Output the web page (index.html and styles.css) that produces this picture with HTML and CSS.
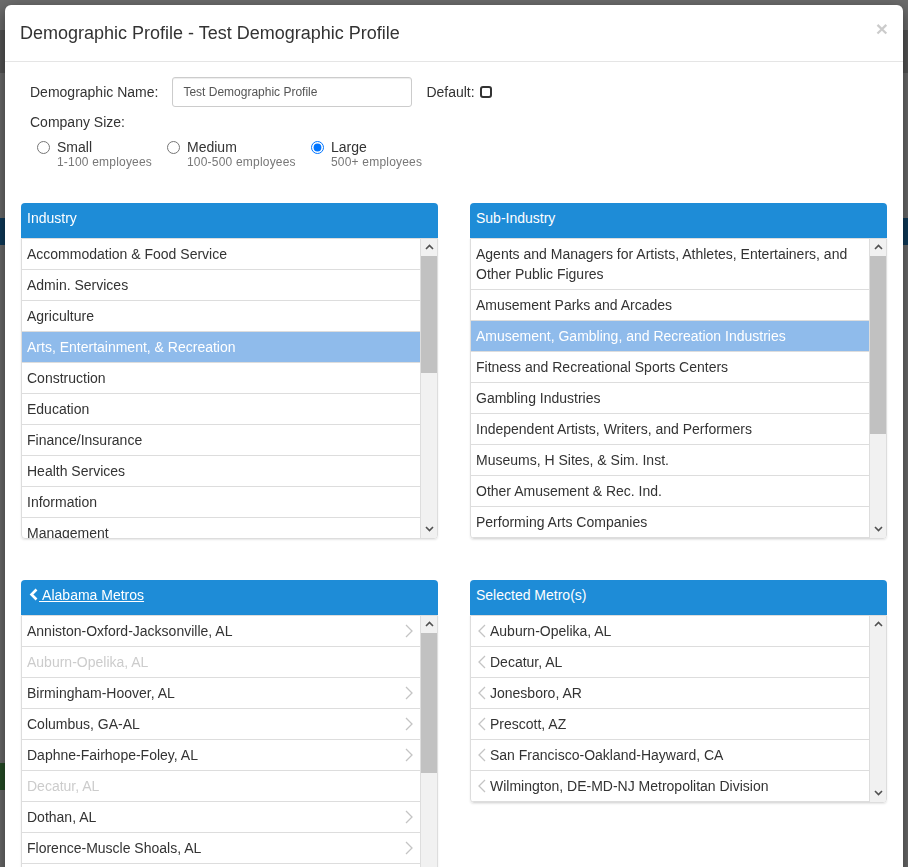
FILE: index.html
```html
<!DOCTYPE html>
<html lang="en">

<head>
  <meta charset="UTF-8">
  <title>Demographic Profile</title>
  <link rel="stylesheet" href="styles.css">
</head>

<body>
  <!-- page behind the modal -->
  <div class="page">
    <div class="page-top"></div>
    <div class="page-nav"></div>
    <div class="page-btn"></div>
  </div>
  <div class="backdrop"></div>

  <div class="modal">
    <div class="modal-header">
      <h4 class="modal-title">Demographic Profile - Test Demographic Profile</h4>
      <button class="close">&times;</button>
    </div>

    <div class="modal-body">
      <div class="fields">
        <div class="field-row">
          <label class="lbl">Demographic Name:</label>
          <input type="text" class="name-input" value="Test Demographic Profile">
          <label class="lbl default-lbl">Default:</label>
          <input type="checkbox" class="chk">
        </div>
        <div class="size-lbl">Company Size:</div>
        <div class="sizes">
          <label class="size size-small">
            <input type="radio" name="size">
            <span class="size-text"><span class="size-name">Small</span><span class="size-sub">1-100 employees</span></span>
          </label>
          <label class="size size-medium">
            <input type="radio" name="size">
            <span class="size-text"><span class="size-name">Medium</span><span class="size-sub">100-500 employees</span></span>
          </label>
          <label class="size">
            <input type="radio" name="size" checked>
            <span class="size-text"><span class="size-name">Large</span><span class="size-sub">500+ employees</span></span>
          </label>
        </div>
      </div>

      <div class="panels">
        <!-- Industry -->
        <div class="panel">
          <div class="panel-heading">Industry</div>
          <div class="panel-box">
            <div class="list">
              <div class="item">Accommodation &amp; Food Service</div>
              <div class="item">Admin. Services</div>
              <div class="item">Agriculture</div>
              <div class="item active">Arts, Entertainment, &amp; Recreation</div>
              <div class="item">Construction</div>
              <div class="item">Education</div>
              <div class="item">Finance/Insurance</div>
              <div class="item">Health Services</div>
              <div class="item">Information</div>
              <div class="item">Management</div>
            </div>
            <div class="scrollbar">
              <span class="sb-btn"><svg width="9" height="6" viewBox="0 0 9 6"><polyline points="1,5 4.5,1.5 8,5" /></svg></span>
              <span class="thumb" style="height:117px"></span>
              <span class="fill"></span>
              <span class="sb-btn"><svg width="9" height="6" viewBox="0 0 9 6"><polyline points="1,1 4.5,4.5 8,1" /></svg></span>
            </div>
          </div>
        </div>

        <!-- Sub-Industry -->
        <div class="panel">
          <div class="panel-heading">Sub-Industry</div>
          <div class="panel-box">
            <div class="list">
              <div class="item">Agents and Managers for Artists, Athletes, Entertainers, and Other Public Figures</div>
              <div class="item">Amusement Parks and Arcades</div>
              <div class="item active">Amusement, Gambling, and Recreation Industries</div>
              <div class="item">Fitness and Recreational Sports Centers</div>
              <div class="item">Gambling Industries</div>
              <div class="item">Independent Artists, Writers, and Performers</div>
              <div class="item">Museums, H Sites, &amp; Sim. Inst.</div>
              <div class="item">Other Amusement &amp; Rec. Ind.</div>
              <div class="item">Performing Arts Companies</div>
            </div>
            <div class="scrollbar">
              <span class="sb-btn"><svg width="9" height="6" viewBox="0 0 9 6"><polyline points="1,5 4.5,1.5 8,5" /></svg></span>
              <span class="thumb" style="height:178px"></span>
              <span class="fill"></span>
              <span class="sb-btn"><svg width="9" height="6" viewBox="0 0 9 6"><polyline points="1,1 4.5,4.5 8,1" /></svg></span>
            </div>
          </div>
        </div>

        <!-- Alabama Metros -->
        <div class="panel">
          <div class="panel-heading">
            <a href="#" class="back-link"><svg class="back-icon" width="9" height="13" viewBox="0 0 9 13"><polyline points="7.5,1.5 2.5,6.5 7.5,11.5" /></svg> Alabama Metros</a>
          </div>
          <div class="panel-box">
            <div class="list">
              <div class="item">Anniston-Oxford-Jacksonville, AL<svg class="chev-r" width="8" height="14" viewBox="0 0 8 14"><polyline points="1,1 7,7 1,13" /></svg></div>
              <div class="item disabled">Auburn-Opelika, AL</div>
              <div class="item">Birmingham-Hoover, AL<svg class="chev-r" width="8" height="14" viewBox="0 0 8 14"><polyline points="1,1 7,7 1,13" /></svg></div>
              <div class="item">Columbus, GA-AL<svg class="chev-r" width="8" height="14" viewBox="0 0 8 14"><polyline points="1,1 7,7 1,13" /></svg></div>
              <div class="item">Daphne-Fairhope-Foley, AL<svg class="chev-r" width="8" height="14" viewBox="0 0 8 14"><polyline points="1,1 7,7 1,13" /></svg></div>
              <div class="item disabled">Decatur, AL</div>
              <div class="item">Dothan, AL<svg class="chev-r" width="8" height="14" viewBox="0 0 8 14"><polyline points="1,1 7,7 1,13" /></svg></div>
              <div class="item">Florence-Muscle Shoals, AL<svg class="chev-r" width="8" height="14" viewBox="0 0 8 14"><polyline points="1,1 7,7 1,13" /></svg></div>
              <div class="item">Gadsden, AL<svg class="chev-r" width="8" height="14" viewBox="0 0 8 14"><polyline points="1,1 7,7 1,13" /></svg></div>
            </div>
            <div class="scrollbar">
              <span class="sb-btn"><svg width="9" height="6" viewBox="0 0 9 6"><polyline points="1,5 4.5,1.5 8,5" /></svg></span>
              <span class="thumb" style="height:140px"></span>
              <span class="fill"></span>
              <span class="sb-btn"><svg width="9" height="6" viewBox="0 0 9 6"><polyline points="1,1 4.5,4.5 8,1" /></svg></span>
            </div>
          </div>
        </div>

        <!-- Selected Metros -->
        <div class="panel">
          <div class="panel-heading">Selected Metro(s)</div>
          <div class="panel-box short">
            <div class="list">
              <div class="item"><svg class="chev-l" width="8" height="14" viewBox="0 0 8 14"><polyline points="7,1 1,7 7,13" /></svg>Auburn-Opelika, AL</div>
              <div class="item"><svg class="chev-l" width="8" height="14" viewBox="0 0 8 14"><polyline points="7,1 1,7 7,13" /></svg>Decatur, AL</div>
              <div class="item"><svg class="chev-l" width="8" height="14" viewBox="0 0 8 14"><polyline points="7,1 1,7 7,13" /></svg>Jonesboro, AR</div>
              <div class="item"><svg class="chev-l" width="8" height="14" viewBox="0 0 8 14"><polyline points="7,1 1,7 7,13" /></svg>Prescott, AZ</div>
              <div class="item"><svg class="chev-l" width="8" height="14" viewBox="0 0 8 14"><polyline points="7,1 1,7 7,13" /></svg>San Francisco-Oakland-Hayward, CA</div>
              <div class="item"><svg class="chev-l" width="8" height="14" viewBox="0 0 8 14"><polyline points="7,1 1,7 7,13" /></svg>Wilmington, DE-MD-NJ Metropolitan Division</div>
            </div>
            <div class="scrollbar">
              <span class="sb-btn"><svg width="9" height="6" viewBox="0 0 9 6"><polyline points="1,5 4.5,1.5 8,5" /></svg></span>
              <span class="fill"></span>
              <span class="sb-btn"><svg width="9" height="6" viewBox="0 0 9 6"><polyline points="1,1 4.5,4.5 8,1" /></svg></span>
            </div>
          </div>
        </div>
      </div>
    </div>
  </div>
</body>

</html>
```

FILE: styles.css
```css
html,
body {
  margin: 0;
  height: 867px;
  overflow: hidden;
}

body {
  font-family: "Liberation Sans", Arial, sans-serif;
  font-size: 14px;
  color: #333;
  background: #fff;
}

/* page behind the backdrop */
.page-top {
  height: 43px;
  margin-top: 30px;
  background: #cacaca;
}

.page-nav {
  height: 27px;
  margin-top: 145px;
  background: #218ad6;
}

.page-btn {
  width: 40px;
  height: 27px;
  margin-top: 518px;
  background: #5cb85c;
}

.backdrop {
  position: fixed;
  top: 0;
  left: 0;
  right: 0;
  bottom: 0;
  background: rgba(0, 0, 0, 0.58);
}

/* modal */
.modal {
  position: fixed;
  top: 5px;
  left: 5px;
  width: 898px;
  height: 960px;
  background: #fff;
  border-radius: 6px;
  box-shadow: 0 5px 15px rgba(0, 0, 0, 0.5);
}

.modal-header {
  display: flex;
  justify-content: space-between;
  align-items: flex-start;
  padding: 15px;
  border-bottom: 1px solid #e5e5e5;
}

.modal-title {
  margin: 1px 0 -1px;
  font-size: 18px;
  font-weight: normal;
  line-height: 1.42857;
}

.close {
  margin-top: -2px;
  padding: 0;
  border: 0;
  background: none;
  font-family: inherit;
  font-size: 21px;
  font-weight: bold;
  line-height: 1;
  color: #000;
  opacity: 0.2;
}

.modal-body {
  padding: 15px 16px;
}

/* top form */
.fields {
  padding-left: 9px;
}

.field-row {
  display: flex;
  align-items: center;
  height: 30px;
}

.name-input {
  width: 240px;
  height: 30px;
  box-sizing: border-box;
  margin: 0 0 0 14px;
  padding: 5px 10px;
  font-family: inherit;
  font-size: 12px;
  color: #555;
  border: 1px solid #ccc;
  border-radius: 3px;
  box-shadow: inset 0 1px 1px rgba(0, 0, 0, 0.075);
}

.default-lbl {
  margin-left: 14px;
}

.chk {
  appearance: none;
  width: 12px;
  height: 12px;
  box-sizing: border-box;
  margin: 0 0 0 5px;
  border: 2px solid #333;
  border-radius: 3px;
}

.size-lbl {
  margin-top: 5px;
  line-height: 20px;
}

.sizes {
  display: flex;
  margin-top: 5px;
  padding-left: 7px;
}

.size {
  display: flex;
  align-items: flex-start;
}

.size-small {
  width: 130px;
}

.size-medium {
  width: 144px;
}

.size input {
  width: 13px;
  height: 13px;
  margin: 4px 7px 0 0;
}

.size-text {
  display: flex;
  flex-direction: column;
}

.size-name {
  line-height: 20px;
}

.size-sub {
  margin-top: -3px;
  font-size: 12px;
  line-height: 16px;
  letter-spacing: 0.2px;
  color: #777;
}

/* list panels */
.panels {
  display: grid;
  grid-template-columns: 1fr 1fr;
  column-gap: 32px;
  row-gap: 41px;
  align-items: start;
  margin-top: 33px;
}

.panel-heading {
  height: 30px;
  line-height: 30px;
  padding: 0 6px 5px;
  background: #1e8cd7;
  color: #fff;
  border-radius: 4px 4px 0 0;
}

.back-link {
  color: #fff;
  text-decoration: underline;
}

.back-icon {
  display: inline-block;
  vertical-align: -1px;
  margin: 0 1px 0 2px;
}

.back-icon polyline {
  fill: none;
  stroke: #fff;
  stroke-width: 2.6;
}

.panel-box {
  display: flex;
  height: 301px;
  box-sizing: border-box;
  border: 1px solid #ddd;
  border-radius: 0 0 4px 4px;
  overflow: hidden;
  box-shadow: 0 1px 2px rgba(0, 0, 0, 0.1);
}

.panel-box.short {
  height: auto;
}

.list {
  flex: 1;
  overflow: hidden;
  border-right: 1px solid #ddd;
}

.item {
  display: flex;
  align-items: center;
  padding: 5px;
  line-height: 20px;
  border-bottom: 1px solid #ddd;
}

.item.active {
  background: #8fbbeb;
  color: #fff;
}

.item.disabled {
  color: #ccc;
}

.chev-r {
  margin: 0 2px 0 auto;
  flex-shrink: 0;
}

.chev-l {
  margin: 0 4px 0 2px;
  flex-shrink: 0;
}

.chev-r polyline,
.chev-l polyline {
  fill: none;
  stroke: #c4c4c4;
  stroke-width: 1.3;
}

/* drawn scrollbar */
.scrollbar {
  display: flex;
  flex-direction: column;
  width: 16px;
  background: #f1f1f1;
}

.sb-btn {
  display: flex;
  align-items: center;
  justify-content: center;
  height: 17px;
}

.sb-btn polyline {
  fill: none;
  stroke: #505050;
  stroke-width: 1.6;
}

.thumb {
  background: #c1c1c1;
}

.fill {
  flex: 1;
}
```
